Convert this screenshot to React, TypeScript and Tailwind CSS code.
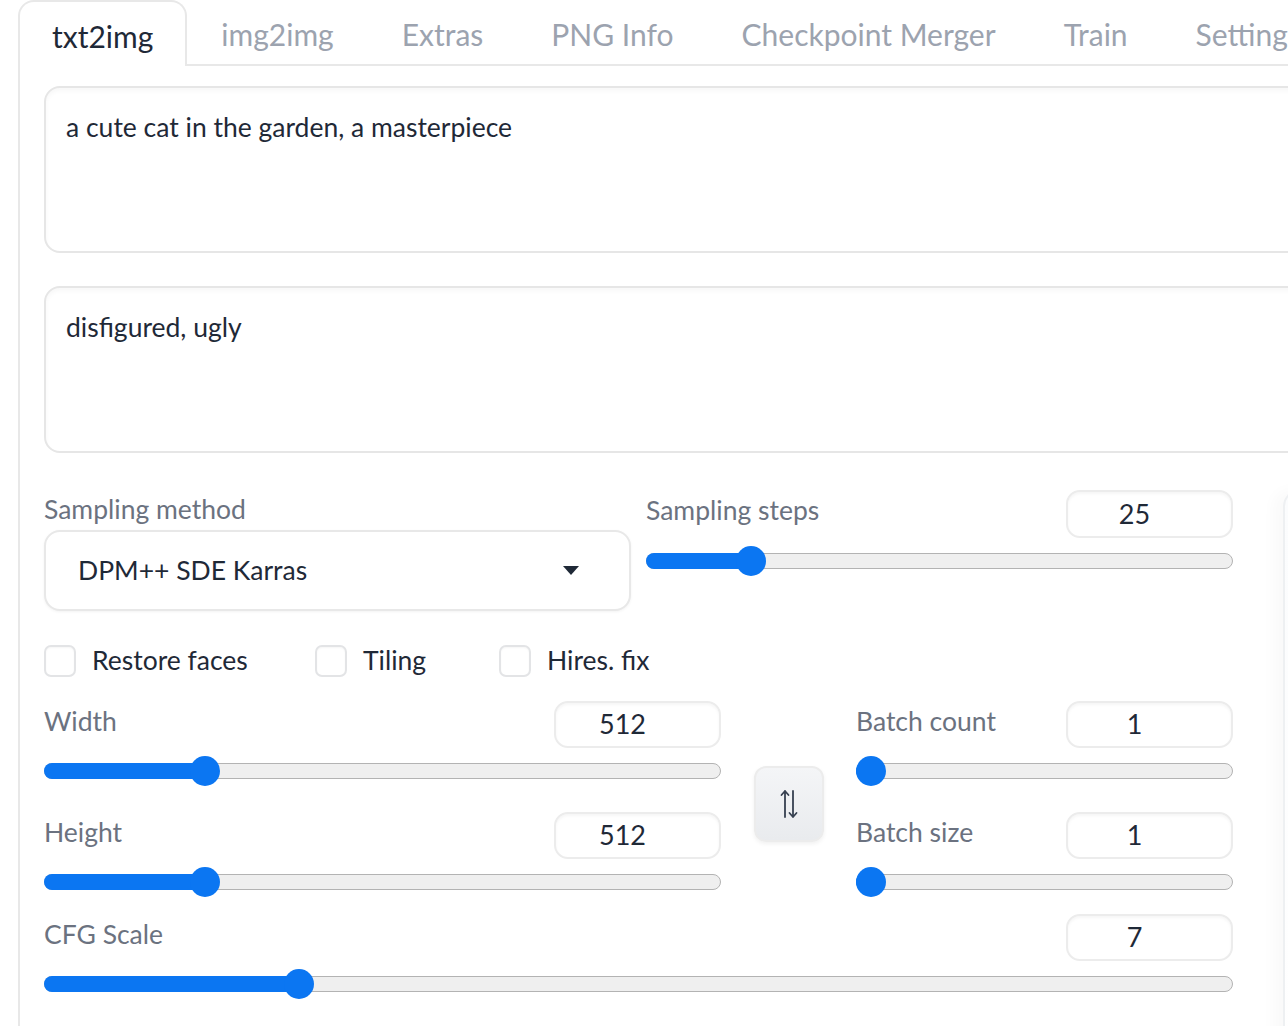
import React from "react"

const tabs = ["txt2img", "img2img", "Extras", "PNG Info", "Checkpoint Merger", "Train", "Settings"]

function NumBox({ value, tall = false }: { value: string; tall?: boolean }) {
  return (
    <div
      className={`flex w-[167px] shrink-0 items-center justify-center rounded-[14px] border-2 border-[#ececec] bg-white pr-[30px] text-[27px] text-[#1f2937] shadow-[inset_0_2px_3px_rgba(0,0,0,0.04)] ${
        tall ? "h-[48px]" : "h-[47px]"
      }`}
    >
      {value}
    </div>
  )
}

function Slider({ pct }: { pct: number }) {
  // thumb is 30px wide, so its centre travels from 15px to (width - 15px)
  const pos = `calc(15px + (100% - 30px) * ${pct})`
  return (
    <div className="relative h-[16px] w-full">
      <div className="absolute inset-0 rounded-full border-[1.5px] border-[#b3b3b3] bg-[#efefef]" />
      <div className="absolute left-0 top-0 h-full rounded-full bg-[#0b76f2]" style={{ width: pos }} />
      <div
        className="absolute top-1/2 h-[30px] w-[30px] -translate-x-1/2 -translate-y-1/2 rounded-full bg-[#0b76f2]"
        style={{ left: pos }}
      />
    </div>
  )
}

function SliderBlock({
  label,
  value,
  pct,
  tall = false,
  className = "",
}: {
  label: string
  value: string
  pct: number
  tall?: boolean
  className?: string
}) {
  return (
    <div className={className}>
      <div className="flex items-center justify-between">
        <span className="-mt-[6px] text-[26.5px] text-[#6b7280]">{label}</span>
        <NumBox value={value} tall={tall} />
      </div>
      <div className="mt-[15px]">
        <Slider pct={pct} />
      </div>
    </div>
  )
}

function Check({ label, className = "" }: { label: string; className?: string }) {
  return (
    <label className={`flex items-center gap-[16px] ${className}`}>
      <span className="h-[32px] w-[32px] rounded-[7px] border-2 border-[#e3e4e6] bg-white shadow-[inset_0_1px_2px_rgba(0,0,0,0.04)]" />
      <span className="text-[26.5px] text-[#1f2937]">{label}</span>
    </label>
  )
}

function PromptBox({ text }: { text: string }) {
  return (
    <div className="h-[167px] w-full rounded-[16px] border-2 border-[#e6e6e6] bg-white px-[20px] pt-[18px] text-[26.5px] leading-[42px] text-[#1f2937] shadow-[inset_0_3px_4px_rgba(0,0,0,0.03)]">
      {text}
    </div>
  )
}

export default function App() {
  return (
    <div className="h-[1026px] w-[1288px] overflow-hidden bg-white font-['Lato','Noto_Sans',sans-serif]">
      <div className="ml-[18px] w-[1500px]">
        {/* Tab strip */}
        <div className="flex h-[66px] border-b-2 border-[#e8e8e8]">
          {tabs.map((t, i) =>
            i === 0 ? (
              <div
                key={t}
                className="-mb-[2px] flex h-[66px] items-center rounded-t-[16px] border-2 border-b-0 border-[#e8e8e8] bg-white px-[32px] pt-[4px] text-[30px] text-[#1f2937]"
              >
                {t}
              </div>
            ) : (
              <div
                key={t}
                className="flex h-[64px] items-center border-2 border-transparent px-[32px] pt-[4px] text-[30px] text-[#9ca3af]"
              >
                {t}
              </div>
            )
          )}
        </div>

        {/* Panel */}
        <div className="h-[970px] border-l-2 border-[#e8e8e8] pl-[24px] pt-[20px]">
          <PromptBox text="a cute cat in the garden, a masterpiece" />
          <div className="mt-[33px]">
            <PromptBox text="disfigured, ugly" />
          </div>

          <div className="mt-[37px] flex">
            {/* Left column: settings */}
            <div className="flex w-[1189px] shrink-0 flex-col">
              <div className="flex gap-[15px]">
                <div className="w-[587px]">
                  <div className="flex h-[40px] items-center text-[26.5px] text-[#6b7280]">Sampling method</div>
                  <div className="flex h-[81px] items-center justify-between rounded-[16px] border-2 border-[#e8e8e8] bg-white pl-[32px] pr-[50px] text-[26.5px] text-[#1f2937] shadow-[0_1px_3px_rgba(0,0,0,0.05)]">
                    <span>DPM++ SDE Karras</span>
                    <svg width="16" height="9" viewBox="0 0 16 9">
                      <path d="M0 0 L16 0 L8 9 Z" fill="#1f2937" />
                    </svg>
                  </div>
                </div>
                <SliderBlock className="w-[587px]" label="Sampling steps" value="25" pct={0.161} tall />
              </div>

              <div className="mt-[30px] flex h-[40px]">
                <Check className="w-[271px]" label="Restore faces" />
                <Check className="w-[184px]" label="Tiling" />
                <Check label="Hires. fix" />
              </div>

              <div className="mt-[20px] flex">
                <div className="w-[677px]">
                  <SliderBlock label="Width" value="512" pct={0.226} />
                  <SliderBlock className="mt-[33px]" label="Height" value="512" pct={0.226} />
                </div>
                <div className="flex w-[135px] items-start justify-center pt-[65px]">
                  <button className="flex h-[76px] w-[70px] items-center justify-center rounded-[12px] border-2 border-[#ececec] bg-gradient-to-b from-[#f4f5f7] to-[#e9ebee] shadow-[0_2px_4px_rgba(0,0,0,0.06)]">
                    <svg width="18" height="30" viewBox="0 0 18 30" fill="none" stroke="#374151" strokeWidth="1.8" strokeLinecap="round" strokeLinejoin="round">
                      <path d="M5 28 V2 M1.5 6 L5 2 L8.5 6" />
                      <path d="M13 2 V28 M9.5 24 L13 28 L16.5 24" />
                    </svg>
                  </button>
                </div>
                <div className="w-[377px]">
                  <SliderBlock label="Batch count" value="1" pct={0} />
                  <SliderBlock className="mt-[33px]" label="Batch size" value="1" pct={0} />
                </div>
              </div>

              <SliderBlock className="mt-[24px]" label="CFG Scale" value="7" pct={0.207} />
            </div>

            {/* Right column: output panel edge */}
            <div className="ml-[50px] h-[600px] flex-1 rounded-tl-[16px] border-l-2 border-t-2 border-[#eef0f2] bg-gradient-to-b from-[#fbfcfd] to-white shadow-[-10px_0_14px_rgba(0,0,0,0.025)]" />
          </div>
        </div>
      </div>
    </div>
  )
}
